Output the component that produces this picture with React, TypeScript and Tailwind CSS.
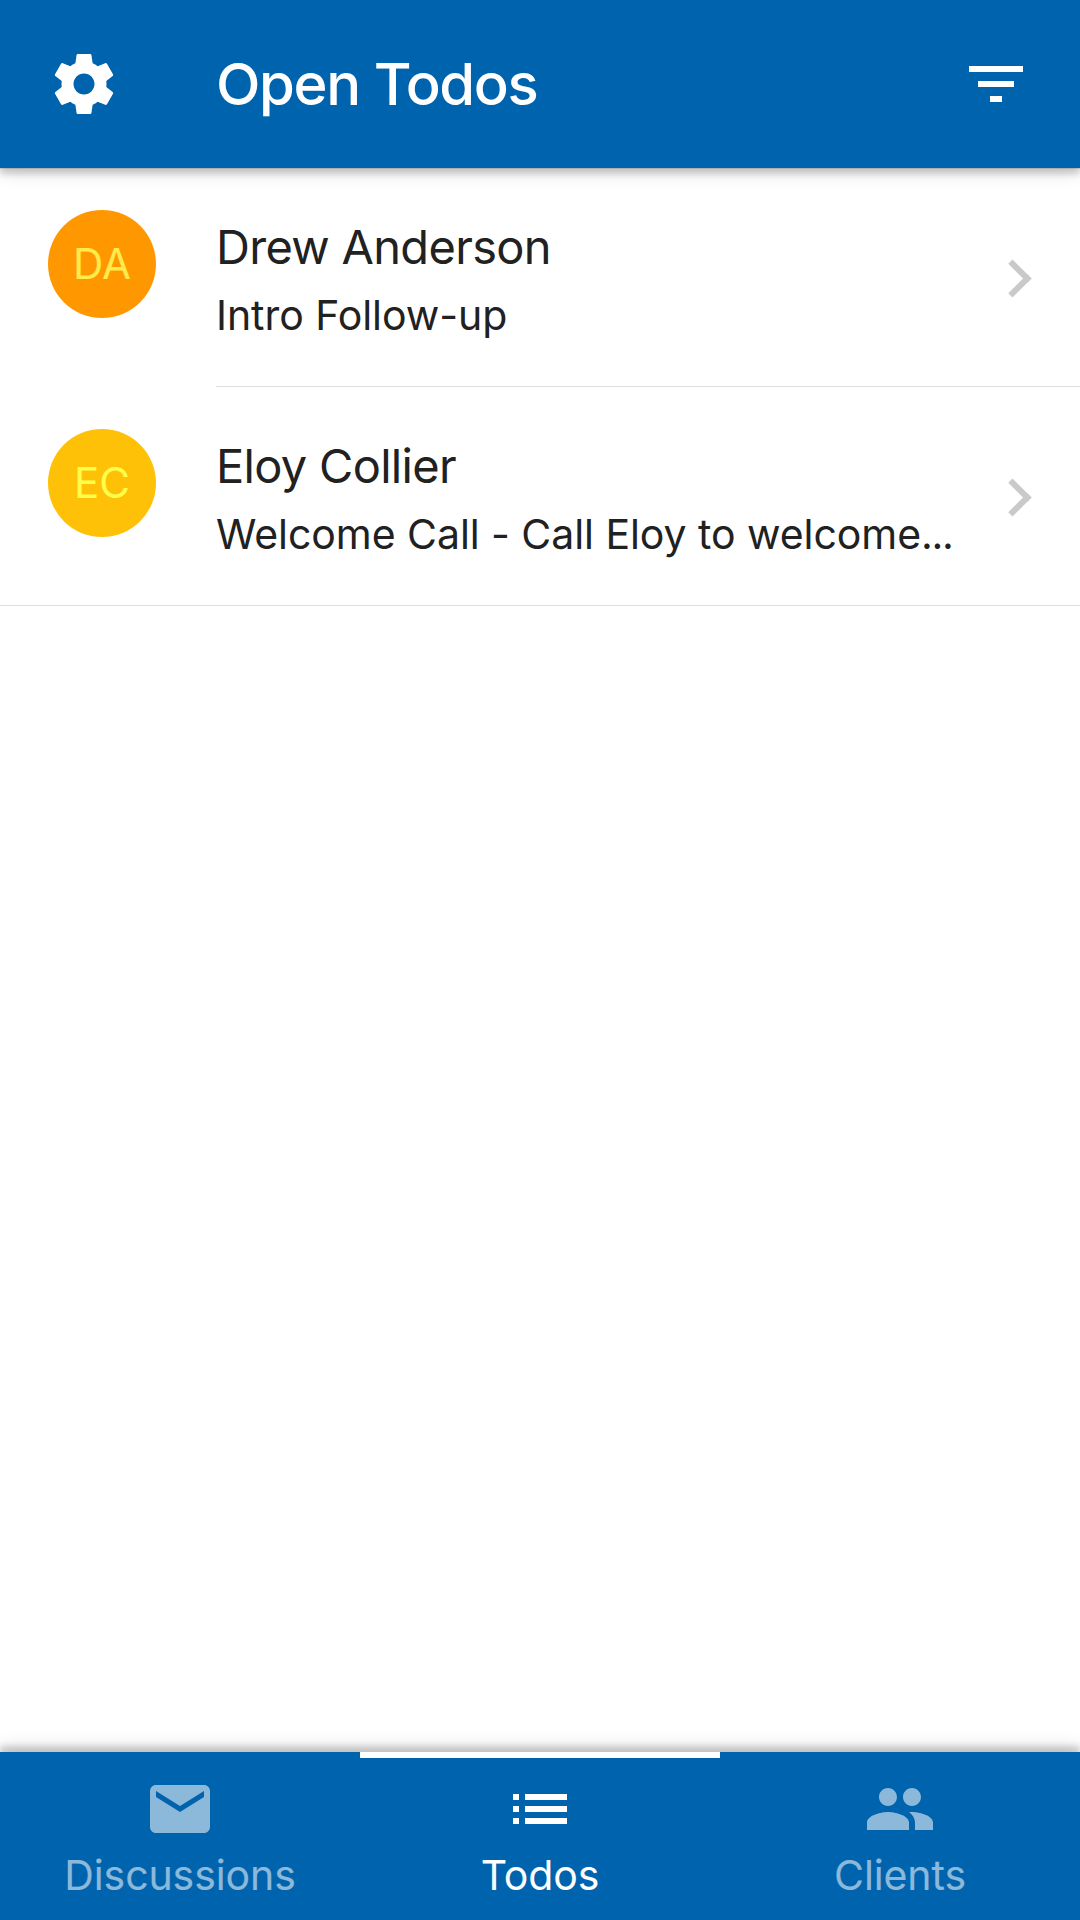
import { MdEmail, MdFilterList, MdList, MdPeople } from "react-icons/md";
import type { IconType } from "react-icons";
import clsx from "clsx";

interface TodoProps {
  initials: string;
  name: string;
  description: string;
  avatarClass: string;
  clipped?: boolean;
  last?: boolean;
}

interface TabProps {
  label: string;
  icon: IconType;
  active?: boolean;
}

function SettingsIcon() {
  return (
    <svg viewBox="0 0 24 24" fill="currentColor" className="size-[72px]">
      <path d="M19.43 12.98c.04-.32.07-.64.07-.98s-.03-.66-.07-.98l2.11-1.65c.19-.15.24-.42.12-.64l-2-3.46c-.12-.22-.39-.3-.61-.22l-2.49 1c-.52-.4-1.08-.73-1.69-.98l-.38-2.65C14.46 2.18 14.25 2 14 2h-4c-.25 0-.46.18-.49.42l-.38 2.65c-.61.25-1.17.59-1.69.98l-2.49-1c-.23-.09-.49 0-.61.22l-2 3.46c-.13.22-.07.49.12.64l2.11 1.65c-.04.32-.07.65-.07.98s.03.66.07.98l-2.11 1.65c-.19.15-.24.42-.12.64l2 3.46c.12.22.39.3.61.22l2.49-1c.52.4 1.08.73 1.69.98l.38 2.65c.03.24.24.42.49.42h4c.25 0 .46-.18.49-.42l.38-2.65c.61-.25 1.17-.59 1.69-.98l2.49 1c.23.09.49 0 .61-.22l2-3.46c.12-.22.07-.49-.12-.64l-2.11-1.65zM12 15.5c-1.93 0-3.5-1.57-3.5-3.5s1.57-3.5 3.5-3.5 3.5 1.57 3.5 3.5-1.57 3.5-3.5 3.5z" />
    </svg>
  );
}

function Todo({ initials, name, description, avatarClass, clipped, last }: TodoProps) {
  return (
    <li className={clsx("flex h-[219px]", last && "border-b border-[#dedede]")}>
      <div className="w-[216px] shrink-0 pl-12 pt-[42px]">
        <span
          className={clsx(
            "flex size-[108px] items-center justify-center rounded-full text-[42px] leading-none",
            avatarClass
          )}
        >
          {initials}
        </span>
      </div>
      <div
        className={clsx(
          "flex min-w-0 flex-1 items-center pr-[54px]",
          !last && "border-b border-[#dedede]"
        )}
      >
        <div className="flex-1 pt-[7px]">
          <p className="text-[47px] leading-[68px] tracking-[-0.7px]">{name}</p>
          <p className="text-[41px] leading-[68px] tracking-[-0.06px] whitespace-nowrap">
            {description}
            {clipped && <span className="tracking-[-1.4px]">...</span>}
          </p>
        </div>
        <span className="mt-[3px] size-[27px] rotate-45 border-t-6 border-r-6 border-[#c9c9c9]" />
      </div>
    </li>
  );
}

function Tab({ label, icon: Icon, active }: TabProps) {
  return (
    <button
      className={clsx(
        "flex flex-1 flex-col items-center border-t-6 pt-[15px]",
        active ? "border-white text-white" : "border-transparent text-white/55"
      )}
    >
      <Icon className="size-[72px]" />
      <span className="mt-0.5 text-[41px] leading-[56px] tracking-[-0.1px]">{label}</span>
    </button>
  );
}

export default function App() {
  return (
    <div className="flex h-[1920px] w-[1080px] flex-col overflow-hidden bg-white font-['Inter',sans-serif] text-[#212121] antialiased">
      <header className="z-10 flex h-[168px] shrink-0 items-center bg-[#0063ad] px-12 text-white shadow-[0_1px_0_rgba(0,0,0,0.12),0_6px_6px_rgba(0,0,0,0.15),0_3px_18px_rgba(0,0,0,0.16)]">
        <SettingsIcon />
        <h1 className="ml-24 flex-1 text-[58px] leading-none font-medium tracking-[-1.4px]">
          Open Todos
        </h1>
        <MdFilterList className="size-[72px]" />
      </header>

      <ul className="flex-1">
        <Todo
          initials="DA"
          name="Drew Anderson"
          description="Intro Follow-up"
          avatarClass="bg-[#ff9800] text-[#ffeb4b]"
        />
        <Todo
          initials="EC"
          name="Eloy Collier"
          description="Welcome Call - Call Eloy to welcome"
          avatarClass="bg-[#ffc107] text-[#ffff4b]"
          clipped
          last
        />
      </ul>

      <nav className="z-10 flex h-[168px] shrink-0 bg-[#0063ad] shadow-[0_-6px_6px_rgba(0,0,0,0.15),0_-3px_18px_rgba(0,0,0,0.16)]">
        <Tab label="Discussions" icon={MdEmail} />
        <Tab label="Todos" icon={MdList} active />
        <Tab label="Clients" icon={MdPeople} />
      </nav>
    </div>
  );
}
